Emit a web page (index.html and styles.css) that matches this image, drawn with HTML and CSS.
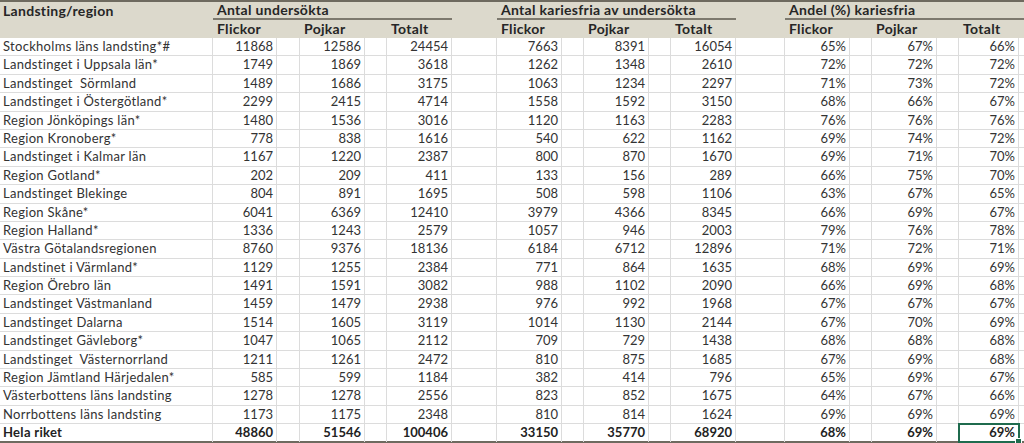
FILE: index.html
```html
<!DOCTYPE html>
<html lang="sv">
<head>
<meta charset="utf-8">
<title>Kariesfria</title>
<link rel="stylesheet" href="styles.css">
</head>
<body>
<div class="sheet">
  <div class="head">
    <div class="hrow r1">
      <div class="hc">Landsting/region</div>
      <div class="grp g1">Antal undersökta</div>
      <div class="hc"></div>
      <div class="grp g2">Antal kariesfria av undersökta</div>
      <div class="hc"></div>
      <div class="grp g3">Andel (%) kariesfria</div>
    </div>
    <div class="hrow r2">
      <div class="hc"></div>
      <div class="hc">Flickor</div><div></div><div class="hc">Pojkar</div><div></div><div class="hc">Totalt</div><div></div>
      <div class="hc">Flickor</div><div></div><div class="hc">Pojkar</div><div></div><div class="hc">Totalt</div><div></div>
      <div class="hc">Flickor</div><div></div><div class="hc">Pojkar</div><div></div><div class="hc">Totalt</div><div></div>
    </div>
  </div>

  <div class="row"><div class="nm">Stockholms läns landsting*#</div><div class="v">11868</div><div class="sp"></div><div class="v">12586</div><div class="sp"></div><div class="v">24454</div><div class="sp"></div><div class="v">7663</div><div class="sp"></div><div class="v">8391</div><div class="sp"></div><div class="v">16054</div><div class="sp"></div><div class="v">65%</div><div class="sp"></div><div class="v">67%</div><div class="sp"></div><div class="v">66%</div><div class="end"></div></div>
  <div class="row"><div class="nm">Landstinget i Uppsala län*</div><div class="v">1749</div><div class="sp"></div><div class="v">1869</div><div class="sp"></div><div class="v">3618</div><div class="sp"></div><div class="v">1262</div><div class="sp"></div><div class="v">1348</div><div class="sp"></div><div class="v">2610</div><div class="sp"></div><div class="v">72%</div><div class="sp"></div><div class="v">72%</div><div class="sp"></div><div class="v">72%</div><div class="end"></div></div>
  <div class="row"><div class="nm">Landstinget&nbsp; Sörmland</div><div class="v">1489</div><div class="sp"></div><div class="v">1686</div><div class="sp"></div><div class="v">3175</div><div class="sp"></div><div class="v">1063</div><div class="sp"></div><div class="v">1234</div><div class="sp"></div><div class="v">2297</div><div class="sp"></div><div class="v">71%</div><div class="sp"></div><div class="v">73%</div><div class="sp"></div><div class="v">72%</div><div class="end"></div></div>
  <div class="row"><div class="nm">Landstinget i Östergötland*</div><div class="v">2299</div><div class="sp"></div><div class="v">2415</div><div class="sp"></div><div class="v">4714</div><div class="sp"></div><div class="v">1558</div><div class="sp"></div><div class="v">1592</div><div class="sp"></div><div class="v">3150</div><div class="sp"></div><div class="v">68%</div><div class="sp"></div><div class="v">66%</div><div class="sp"></div><div class="v">67%</div><div class="end"></div></div>
  <div class="row"><div class="nm">Region Jönköpings län*</div><div class="v">1480</div><div class="sp"></div><div class="v">1536</div><div class="sp"></div><div class="v">3016</div><div class="sp"></div><div class="v">1120</div><div class="sp"></div><div class="v">1163</div><div class="sp"></div><div class="v">2283</div><div class="sp"></div><div class="v">76%</div><div class="sp"></div><div class="v">76%</div><div class="sp"></div><div class="v">76%</div><div class="end"></div></div>
  <div class="row"><div class="nm">Region Kronoberg*</div><div class="v">778</div><div class="sp"></div><div class="v">838</div><div class="sp"></div><div class="v">1616</div><div class="sp"></div><div class="v">540</div><div class="sp"></div><div class="v">622</div><div class="sp"></div><div class="v">1162</div><div class="sp"></div><div class="v">69%</div><div class="sp"></div><div class="v">74%</div><div class="sp"></div><div class="v">72%</div><div class="end"></div></div>
  <div class="row"><div class="nm">Landstinget i Kalmar län</div><div class="v">1167</div><div class="sp"></div><div class="v">1220</div><div class="sp"></div><div class="v">2387</div><div class="sp"></div><div class="v">800</div><div class="sp"></div><div class="v">870</div><div class="sp"></div><div class="v">1670</div><div class="sp"></div><div class="v">69%</div><div class="sp"></div><div class="v">71%</div><div class="sp"></div><div class="v">70%</div><div class="end"></div></div>
  <div class="row"><div class="nm">Region Gotland*</div><div class="v">202</div><div class="sp"></div><div class="v">209</div><div class="sp"></div><div class="v">411</div><div class="sp"></div><div class="v">133</div><div class="sp"></div><div class="v">156</div><div class="sp"></div><div class="v">289</div><div class="sp"></div><div class="v">66%</div><div class="sp"></div><div class="v">75%</div><div class="sp"></div><div class="v">70%</div><div class="end"></div></div>
  <div class="row"><div class="nm">Landstinget Blekinge</div><div class="v">804</div><div class="sp"></div><div class="v">891</div><div class="sp"></div><div class="v">1695</div><div class="sp"></div><div class="v">508</div><div class="sp"></div><div class="v">598</div><div class="sp"></div><div class="v">1106</div><div class="sp"></div><div class="v">63%</div><div class="sp"></div><div class="v">67%</div><div class="sp"></div><div class="v">65%</div><div class="end"></div></div>
  <div class="row"><div class="nm">Region Skåne*</div><div class="v">6041</div><div class="sp"></div><div class="v">6369</div><div class="sp"></div><div class="v">12410</div><div class="sp"></div><div class="v">3979</div><div class="sp"></div><div class="v">4366</div><div class="sp"></div><div class="v">8345</div><div class="sp"></div><div class="v">66%</div><div class="sp"></div><div class="v">69%</div><div class="sp"></div><div class="v">67%</div><div class="end"></div></div>
  <div class="row"><div class="nm">Region Halland*</div><div class="v">1336</div><div class="sp"></div><div class="v">1243</div><div class="sp"></div><div class="v">2579</div><div class="sp"></div><div class="v">1057</div><div class="sp"></div><div class="v">946</div><div class="sp"></div><div class="v">2003</div><div class="sp"></div><div class="v">79%</div><div class="sp"></div><div class="v">76%</div><div class="sp"></div><div class="v">78%</div><div class="end"></div></div>
  <div class="row"><div class="nm">Västra Götalandsregionen</div><div class="v">8760</div><div class="sp"></div><div class="v">9376</div><div class="sp"></div><div class="v">18136</div><div class="sp"></div><div class="v">6184</div><div class="sp"></div><div class="v">6712</div><div class="sp"></div><div class="v">12896</div><div class="sp"></div><div class="v">71%</div><div class="sp"></div><div class="v">72%</div><div class="sp"></div><div class="v">71%</div><div class="end"></div></div>
  <div class="row"><div class="nm">Landstinet i Värmland*</div><div class="v">1129</div><div class="sp"></div><div class="v">1255</div><div class="sp"></div><div class="v">2384</div><div class="sp"></div><div class="v">771</div><div class="sp"></div><div class="v">864</div><div class="sp"></div><div class="v">1635</div><div class="sp"></div><div class="v">68%</div><div class="sp"></div><div class="v">69%</div><div class="sp"></div><div class="v">69%</div><div class="end"></div></div>
  <div class="row"><div class="nm">Region Örebro län</div><div class="v">1491</div><div class="sp"></div><div class="v">1591</div><div class="sp"></div><div class="v">3082</div><div class="sp"></div><div class="v">988</div><div class="sp"></div><div class="v">1102</div><div class="sp"></div><div class="v">2090</div><div class="sp"></div><div class="v">66%</div><div class="sp"></div><div class="v">69%</div><div class="sp"></div><div class="v">68%</div><div class="end"></div></div>
  <div class="row"><div class="nm">Landstinget Västmanland</div><div class="v">1459</div><div class="sp"></div><div class="v">1479</div><div class="sp"></div><div class="v">2938</div><div class="sp"></div><div class="v">976</div><div class="sp"></div><div class="v">992</div><div class="sp"></div><div class="v">1968</div><div class="sp"></div><div class="v">67%</div><div class="sp"></div><div class="v">67%</div><div class="sp"></div><div class="v">67%</div><div class="end"></div></div>
  <div class="row"><div class="nm">Landstinget Dalarna</div><div class="v">1514</div><div class="sp"></div><div class="v">1605</div><div class="sp"></div><div class="v">3119</div><div class="sp"></div><div class="v">1014</div><div class="sp"></div><div class="v">1130</div><div class="sp"></div><div class="v">2144</div><div class="sp"></div><div class="v">67%</div><div class="sp"></div><div class="v">70%</div><div class="sp"></div><div class="v">69%</div><div class="end"></div></div>
  <div class="row"><div class="nm">Landstinget Gävleborg*</div><div class="v">1047</div><div class="sp"></div><div class="v">1065</div><div class="sp"></div><div class="v">2112</div><div class="sp"></div><div class="v">709</div><div class="sp"></div><div class="v">729</div><div class="sp"></div><div class="v">1438</div><div class="sp"></div><div class="v">68%</div><div class="sp"></div><div class="v">68%</div><div class="sp"></div><div class="v">68%</div><div class="end"></div></div>
  <div class="row"><div class="nm">Landstinget&nbsp; Västernorrland</div><div class="v">1211</div><div class="sp"></div><div class="v">1261</div><div class="sp"></div><div class="v">2472</div><div class="sp"></div><div class="v">810</div><div class="sp"></div><div class="v">875</div><div class="sp"></div><div class="v">1685</div><div class="sp"></div><div class="v">67%</div><div class="sp"></div><div class="v">69%</div><div class="sp"></div><div class="v">68%</div><div class="end"></div></div>
  <div class="row"><div class="nm">Region Jämtland Härjedalen*</div><div class="v">585</div><div class="sp"></div><div class="v">599</div><div class="sp"></div><div class="v">1184</div><div class="sp"></div><div class="v">382</div><div class="sp"></div><div class="v">414</div><div class="sp"></div><div class="v">796</div><div class="sp"></div><div class="v">65%</div><div class="sp"></div><div class="v">69%</div><div class="sp"></div><div class="v">67%</div><div class="end"></div></div>
  <div class="row"><div class="nm">Västerbottens läns landsting</div><div class="v">1278</div><div class="sp"></div><div class="v">1278</div><div class="sp"></div><div class="v">2556</div><div class="sp"></div><div class="v">823</div><div class="sp"></div><div class="v">852</div><div class="sp"></div><div class="v">1675</div><div class="sp"></div><div class="v">64%</div><div class="sp"></div><div class="v">67%</div><div class="sp"></div><div class="v">66%</div><div class="end"></div></div>
  <div class="row"><div class="nm">Norrbottens läns landsting</div><div class="v">1173</div><div class="sp"></div><div class="v">1175</div><div class="sp"></div><div class="v">2348</div><div class="sp"></div><div class="v">810</div><div class="sp"></div><div class="v">814</div><div class="sp"></div><div class="v">1624</div><div class="sp"></div><div class="v">69%</div><div class="sp"></div><div class="v">69%</div><div class="sp"></div><div class="v">69%</div><div class="end"></div></div>
  <div class="row total"><div class="nm">Hela riket</div><div class="v">48860</div><div class="sp"></div><div class="v">51546</div><div class="sp"></div><div class="v">100406</div><div class="sp"></div><div class="v">33150</div><div class="sp"></div><div class="v">35770</div><div class="sp"></div><div class="v">68920</div><div class="sp"></div><div class="v">68%</div><div class="sp"></div><div class="v">69%</div><div class="sp"></div><div class="v sel">69%</div><div class="end"></div></div>
</div>
</body>
</html>
```

FILE: styles.css
```css
* { box-sizing: border-box; }
html, body { margin: 0; padding: 0; }
body {
  background: #fff;
  width: 1024px;
  height: 443px;
  overflow: hidden;
  font-family: Lato, "DejaVu Sans", sans-serif;
  color: #333;
}
.sheet { display: flex; flex-direction: column; }

.hrow, .row {
  display: grid;
  grid-template-columns: 213px 64px 23px 65px 22px 65px 45px 65px 22px 65px 22px 65px 49px 65px 22px 65px 22px 60px 5px;
}

.head {
  background: #dcd9cc;
  border-top: 2px solid #6e6a5f;
  color: #262626;
  font-weight: bold;
  font-size: 14px;
  letter-spacing: 0.3px;
}
.r1 { height: 17px; }
.r2 { height: 19px; }
.hc { padding-left: 3px; line-height: 17px; white-space: nowrap; }
.r2 .hc { padding-left: 4px; line-height: 19px; }
.grp {
  padding-left: 4px;
  line-height: 16px;
  white-space: nowrap;
  border-bottom: 2px solid #7d796e;
}
.g1 { grid-column: 2 / 7; }
.g2 { grid-column: 8 / 13; }
.g3 { grid-column: 14 / 20; }

.row {
  height: 18.4px;
  font-size: 13px;
  line-height: 17.4px;
  border-bottom: 1px solid #dcdcdc;
}
.row > div { border-right: 1px solid #dcdcdc; white-space: nowrap; }
.nm { padding-left: 3px; letter-spacing: 0.3px; }
.v { text-align: right; padding-right: 3px; }
.row > .end { border-right: none; }

.total {
  font-weight: bold;
  color: #222;
  border-bottom: 2px solid #6e6a5f;
}
.sel {
  position: relative;
  outline: 2px solid #1f6b4e;
  outline-offset: -1px;
}
.sel::after {
  content: "";
  position: absolute;
  right: -4px;
  bottom: -3px;
  width: 5px;
  height: 5px;
  background: #1f6b4e;
  border: 1px solid #fff;
}
```
